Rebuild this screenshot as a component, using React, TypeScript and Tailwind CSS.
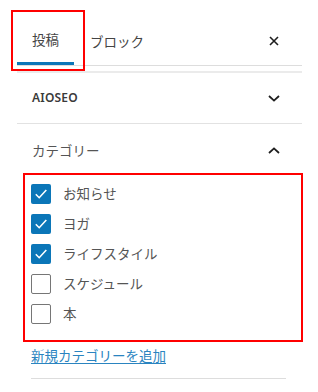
import React from "react";

const categories = [
  { name: "お知らせ", checked: true },
  { name: "ヨガ", checked: true },
  { name: "ライフスタイル", checked: true },
  { name: "スケジュール", checked: false },
  { name: "本", checked: false },
];

function Chevron({ up }: { up?: boolean }) {
  return (
    <svg width="12" height="7" viewBox="0 0 12 7" fill="none" className={up ? "rotate-180" : ""}>
      <path d="M1 1l5 4.6L11 1" stroke="#1e1e1e" strokeWidth="1.8" />
    </svg>
  );
}

function Checkbox({ checked }: { checked: boolean }) {
  if (checked) {
    return (
      <span className="w-[20px] h-[20px] rounded-[2px] bg-[#0b76b8] flex items-center justify-center shrink-0">
        <svg width="14" height="12" viewBox="0 0 14 12" fill="none">
          <path d="M1.8 6.2l3.4 3.5L12.3 2" stroke="#fff" strokeWidth="1.6" />
        </svg>
      </span>
    );
  }
  return <span className="w-[20px] h-[20px] rounded-[2px] border-[1.5px] border-[#767676] bg-white shrink-0" />;
}

export default function App() {
  return (
    <div className="relative w-[318px] h-[392px] bg-white overflow-hidden text-[#1e1e1e] font-['Noto_Sans_CJK_JP',sans-serif]">
      <div className="ml-[17px] w-[285px]">
        {/* tabs header */}
        <div className="pt-[17px] flex items-center border-b border-[#dddddd]">
          <div className="h-[48px] px-[15px] flex items-center text-[13.5px] text-[#444] border-b-[3px] border-[#0b76b8]">
            投稿
          </div>
          <div className="h-[48px] px-[16px] flex items-center text-[13.5px] text-[#444]">
            ブロック
          </div>
          <div className="ml-auto mr-[23px] flex items-center">
            <svg width="10" height="10" viewBox="0 0 10 10" fill="none">
              <path d="M1 1l8 8M9 1l-8 8" stroke="#1e1e1e" strokeWidth="1.6" />
            </svg>
          </div>
        </div>
        <div className="mt-[5px] h-[2px] bg-[#ebebeb]" />

        {/* AIOSEO panel */}
        <div className="h-[51px] px-[15px] flex items-center justify-between border-b border-[#e2e2e2]">
          <span className="text-[12px] font-semibold font-['Noto_Sans',sans-serif] tracking-[0.2px] text-[#3a3a3a]">AIOSEO</span>
          <span className="mr-[7px] flex"><Chevron /></span>
        </div>

        {/* Category panel */}
        <div className="h-[52px] px-[15px] flex items-center justify-between">
          <span className="text-[13.5px] text-[#555]">カテゴリー</span>
          <span className="mr-[7px] flex"><Chevron up /></span>
        </div>
        <div className="pl-[14px] pt-[8px] flex flex-col gap-[10px]">
          {categories.map((c) => (
            <label key={c.name} className="flex items-center gap-[12px] h-[20px]">
              <Checkbox checked={c.checked} />
              <span className="text-[13.5px] text-[#555] leading-none">{c.name}</span>
            </label>
          ))}
        </div>
        <div className="pl-[14px] mt-[20px] leading-[20px]">
          <a className="text-[13.5px] text-[#2a84c0] underline underline-offset-2">新規カテゴリーを追加</a>
        </div>
        <div className="ml-[14px] mr-[16px] mt-[13px] h-px bg-[#dddddd]" />
      </div>

      {/* annotation boxes */}
      <div className="absolute left-[11px] top-[10px] w-[74px] h-[61px] border-2 border-[#ff0000]" />
      <div className="absolute left-[23px] top-[173px] w-[280px] h-[169px] border-2 border-[#ff0000]" />
    </div>
  );
}
